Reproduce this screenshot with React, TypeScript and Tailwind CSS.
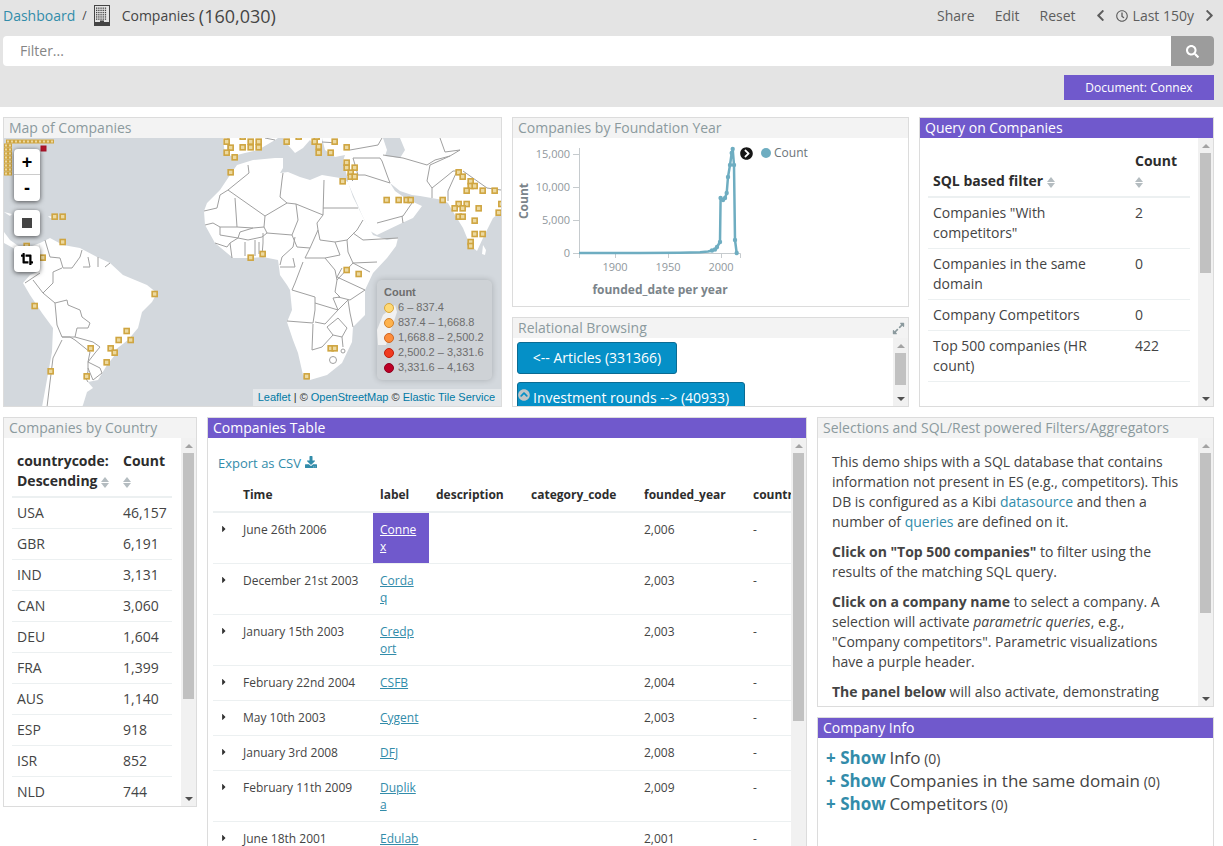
import React from "react";
import { FaChevronLeft, FaChevronRight, FaRegClock, FaSearch, FaDownload, FaCropAlt, FaChevronCircleRight, FaChevronCircleUp, FaExpandAlt, FaCaretRight } from "react-icons/fa";

function Building() {
  const cells: React.ReactNode[] = [];
  for (let r = 0; r < 6; r++) for (let c = 0; c < 5; c++) cells.push(<rect key={r + "-" + c} x={3 + c * 2.2} y={2.5 + r * 2.2} width="1.3" height="1.3" fill="#444" />);
  return (
    <svg width="18" height="21" viewBox="0 0 18 21" className="block">
      <rect x="1.5" y="0.5" width="15" height="20" fill="none" stroke="#444" />
      <rect x="1.5" y="17" width="15" height="3.5" fill="#444" />
      <rect x="7" y="15.5" width="4" height="5" fill="#444" />
      {cells}
    </svg>
  );
}

function Scrollbar({ thumbClass }: { thumbClass: string }) {
  return (
    <div className="w-[15px] shrink-0 bg-[#f1f1f1] flex flex-col items-center overflow-hidden self-stretch">
      <div className="h-[15px] shrink-0 flex items-center justify-center"><div className="w-0 h-0 border-x-[4px] border-x-transparent border-b-[4px] border-b-[#a3a3a3]" /></div>
      <div className="flex-1 w-[11px] min-h-0">
        <div className={"w-[11px] bg-[#c1c1c1] " + thumbClass} />
      </div>
      <div className="h-[15px] shrink-0 flex items-center justify-center"><div className="w-0 h-0 border-x-[4px] border-x-transparent border-t-[4px] border-t-[#505050]" /></div>
    </div>
  );
}

function Panel({ title, purple, className, children, action }: { title: string; purple?: boolean; className: string; children: React.ReactNode; action?: React.ReactNode }) {
  return (
    <section className={"border border-[#dcdcdc] flex flex-col overflow-hidden bg-white " + className}>
      <header className={"h-[20px] shrink-0 pl-[5px] pr-[2px] flex items-center justify-between text-[14px] leading-[20px] " + (purple ? "bg-[#7059cc] text-white" : "bg-[#f3f3f3] text-[#8b9a9e]")}>
        <span>{title}</span>{action}
      </header>
      <div className="flex-1 flex min-h-0 overflow-hidden">{children}</div>
    </section>
  );
}

function Sort() {
  return (
    <span className="inline-flex flex-col align-middle w-[8px] gap-[1px] items-center">
      <span className="w-0 h-0 border-x-[4px] border-x-transparent border-b-[5px] border-b-[#b4bcc0]" />
      <span className="w-0 h-0 border-x-[4px] border-x-transparent border-t-[5px] border-t-[#b4bcc0]" />
    </span>
  );
}

const markers: [number, number][] = [
  [680,425],[692,443],[680,458],[704,472],[692,517],[728,410],[728,442],[752,425],[752,442],[776,425],[776,442],[860,425],[896,410],[944,425],[956,440],[956,458],[992,458],[1004,425],[1040,442],[950,410],[1040,488],[1040,503],[1064,503],[1052,518],[1052,530],[1064,530],[1028,544],[1160,600],[1196,600],[1220,600],[1232,600],[1328,600],[1376,517],[1388,530],[1412,544],[1412,558],[1424,558],[1400,572],[1448,572],[1484,572],[1376,612],[1400,612],[1364,625],[1388,625],[1436,625],[1376,650],[1388,650],[1424,662],[1424,702],[1448,702],[1412,726],[1412,738],[1496,638],[1504,612],[164,650],[188,650],[188,726],[80,738],[128,773],[752,773],[788,762],
];
const markers2: [number, number][] = [[1040,210],[1076,222],[464,282],[104,318],[380,393],[356,420],[392,420],[272,445],[332,445],[344,458],[320,487],[152,514],[260,529],[992,445],[1004,445],[920,529]];

function Marker({ x, y }: { x: number; y: number }) {
  return <rect x={x - 2.5} y={y - 2.5} width="5" height="5" fill="#ecd9a0" stroke="#cfa540" strokeWidth="1.6" />;
}

const borders = [
  "M248,165 L249,173 L228,190 L220,195 L217,208 L204,211",
  "M235,198 L237,227 L220,227 L213,223 L205,225",
  "M228,190 L265,216 L287,203 L280,197 L282,180 L283,173",
  "M287,203 L296,204 L323,215 L324,180",
  "M265,216 L264,227 L253,228 L237,227",
  "M296,204 L298,220 L292,235 L267,233 L264,227",
  "M292,235 L297,247 L310,248 L318,230 L317,223 L323,215",
  "M323,208 H358",
  "M318,230 L320,240 L335,242 L347,240 L357,230 L363,220",
  "M220,227 L220,235 L238,238 L240,232 L253,228",
  "M238,238 L248,240 L262,237 L267,233",
  "M245,242 V256 M255,240 V256 M259,242 V254",
  "M263,233 V243 L262,256",
  "M295,237 L293,247 L282,257 L280,265",
  "M215,243 L227,247 L230,243 L238,238 M230,243 L232,258",
  "M310,248 L305,258 L325,258 L335,270 L337,280 L335,292 L340,297 L333,298 L338,310 L315,303 L315,297 L292,290",
  "M335,242 L340,255 L325,258 M347,240 L348,252 L353,263 L370,272",
  "M353,233 L363,240 L398,238 M353,263 L377,262",
  "M342,268 L337,277 L365,290 M337,280 L353,263",
  "M280,267 H295 L293,258 M303,262 L295,283 L292,290",
  "M287,321 L313,323 L315,310 L315,303",
  "M315,322 L325,324 L338,310 L348,300 L350,313",
  "M327,327 L338,318 L347,328 L342,337 L333,335 Z",
  "M313,324 L312,350 L322,347 L333,335",
  "M342,337 L343,347",
  "M365,290 L350,300 L338,297",
  "M353,327 L350,313",
  "M45,240 L50,257 L60,258 L63,268 L72,268 L80,257 L82,250",
  "M83,267 H90 L88,257 M98,267 V257 M110,263 L105,267",
  "M62,268 L53,272 L53,283 L43,293 L55,303 L67,300 L68,305 L80,310 L82,317 L90,323 L88,328 L77,328 L75,337 L93,342 L100,347 L95,353 L88,362 L100,368 L102,373 L93,380 L88,368",
  "M40,273 L25,283 M43,293 L33,280",
  "M55,303 L57,325 L62,337 L75,337",
  "M62,340 L53,358 L50,382 L47,407",
  "M62,337 L70,337 L75,340 L90,352 L88,362 L88,372 L85,377 L88,382",
  "M382,161 L387,175 L390,183 M353,158 H380 L382,161 M358,175 H365 L390,183",
  "M353,158 L358,175 L352,181",
  "M377,223 L403,216 L412,203 M402,216 L403,223",
  "M430,165 L427,181 L432,188 L432,198 M430,165 L450,156 L460,150",
  "M432,188 L447,176 L453,171 L457,171 L448,191 L448,201",
  "M463,171 L487,188 L501,190 M383,155 L403,158 L427,165 L435,160 L450,156",
  "M382,138 L378,145 L350,150 M440,138 L445,152 L460,150",
  "M228,138 L228,152 M275,140 L265,138",
  "M322,142 L338,143",
];

function WorldMap() {
  const grid: [number, number][] = [];
  for (let i = 0; i < 12; i++) grid.push([8 + i * 4, 141.5]);
  for (let i = 0; i < 2; i++) for (let r = 1; r < 9; r++) grid.push([6 + i * 4, 141.5 + r * 4]);
  return (
    <svg viewBox="4 138 497 268" width="497" height="268" className="block absolute left-0 top-0">
      <rect x="4" y="138" width="497" height="268" fill="#d3d8dd" />
      <g fill="#ffffff">
        <path d="M204,211 L207,203 L220,190 L230,175 L237,165 L253,160 L275,158 L283,158 L283,168 L280,173 L288,172 L300,177 L310,180 L322,175 L340,178 L348,182 L353,197 L363,217 L373,235 L387,240 L398,238 L396,246 L387,258 L373,273 L365,290 L365,315 L353,327 L352,342 L342,363 L327,375 L310,380 L303,375 L298,353 L293,340 L287,322 L292,310 L290,290 L287,285 L280,275 L278,260 L263,257 L250,258 L233,258 L227,253 L215,243 L205,225 Z" />
        <path d="M40,243 L50,238 L63,245 L80,248 L97,257 L110,263 L123,275 L147,285 L157,293 L152,302 L142,312 L138,328 L128,340 L115,350 L115,355 L107,365 L98,380 L88,382 L93,388 L87,392 L83,405 L82,407 L42,407 L52,352 L53,328 L42,313 L30,295 L23,283 L30,275 L37,272 Z" />
        <path d="M4,232 L10,240 L17,245 L24,249 L40,243 L38,256 L26,254 L15,249 L4,243 Z" />
        <path d="M322,138 L325,150 L335,157 L345,155 L343,161 L348,180 L348,183 L362,215 L370,231 L377,235 L402,223 L413,218 L422,206 L411,201 L405,198 L395,191 L390,183 L400,191 L412,195 L420,196 L443,200 L448,203 L455,215 L463,228 L470,245 L477,251 L483,238 L493,218 L502,211 L502,138 Z" />
        <path d="M223,138 L225,155 L233,156 L245,153 L258,150 L275,140 L278,138 Z" />
        <path d="M283,138 L288,145 L295,153 L303,148 L310,140 L315,145 L318,155 L322,148 L322,138 Z" />
        <path d="M378,345 L377,330 L383,315 L395,305 L397,312 L391,330 L386,345 Z" />
        <path d="M483,245 L486,250 L485,255 L482,254 Z" />
        <path d="M4,212 L12,214 L10,216 Z" />
        <path d="M48,216 L54,217 L50,218 Z" />
      </g>
      <path d="M383,138 L387,150 L385,156 L400,158 L405,150 L400,138 Z" fill="#d3d8dd" />
      <g fill="none" stroke="#a0a0a0" strokeWidth="1" strokeLinejoin="round">
        {borders.map((d) => <path key={d} d={d} />)}
        <circle cx="343" cy="351" r="2" />
        <circle cx="333" cy="360" r="3.5" />
      </g>
      {grid.map(([x, y], i) => <rect key={"g" + i} x={x - 1.5} y={y - 1.5} width="3" height="3" fill="#ecd9a0" stroke="#cfa540" strokeWidth="1" />)}
      <rect x="41" y="146" width="5" height="5" fill="#b0172b" stroke="#a51226" />
      {markers.map(([x, y], i) => <Marker key={"a" + i} x={x / 3} y={y / 3} />)}
      {markers2.map(([x, y], i) => <Marker key={"b" + i} x={x / 3} y={y / 3 + 200} />)}
    </svg>
  );
}

function MapControl({ className, children }: { className: string; children: React.ReactNode }) {
  return <div className={"absolute left-[10px] w-[26px] bg-white rounded-[4px] shadow-[0_1px_5px_rgba(0,0,0,0.65)] flex flex-col items-center " + className}>{children}</div>;
}

const legend = [["#fed976", "#d8a63a", "6 – 837.4"], ["#feb24c", "#d2802a", "837.4 – 1,668.8"], ["#fd8d3c", "#cd6523", "1,668.8 – 2,500.2"], ["#f03b20", "#c21d0b", "2,500.2 – 3,331.6"], ["#bd0026", "#8d001d", "3,331.6 – 4,163"]];

function MapPanel() {
  return (
    <Panel title="Map of Companies" className="w-[499px] h-[290px] shrink-0">
      <div className="relative flex-1 overflow-hidden font-['Liberation_Sans',Arial,sans-serif]">
        <WorldMap />
        <MapControl className="top-[11px] h-[52px]">
          <div className="h-[26px] w-full flex items-center justify-center border-b border-[#ccc] text-[18px] font-bold text-black leading-none">+</div>
          <div className="h-[26px] w-full flex items-center justify-center text-[18px] font-bold text-black leading-none">-</div>
        </MapControl>
        <MapControl className="top-[72px] h-[26px] justify-center"><div className="w-[10px] h-[10px] bg-[#444]" /></MapControl>
        <MapControl className="top-[108px] h-[26px] justify-center"><FaCropAlt className="text-[12px] text-black" /></MapControl>
        <div className="absolute left-[373px] top-[142px] w-[115px] h-[100px] rounded-[5px] bg-[rgba(190,190,190,0.22)] shadow-[0_0_6px_rgba(0,0,0,0.2)] pl-[7px] pt-[5px] text-[11px] leading-[15px] text-[#6d6d6d]">
          <div className="font-bold">Count</div>
          {legend.map(([f, s, t]) => (
            <div key={t} className="flex items-center gap-[4px] text-[11px] h-[15px]">
              <span className="w-[10px] h-[10px] rounded-full border" style={{ background: f, borderColor: s }} />
              <span>{t}</span>
            </div>
          ))}
        </div>
        <div className="absolute right-0 bottom-0 h-[17px] pl-[5px] pr-[6px] bg-[rgba(255,255,255,0.4)] text-[11px] leading-[17px] text-[#333] whitespace-nowrap">
          <span className="text-[#0079a5]">Leaflet</span> | © <span className="text-[#0079a5]">OpenStreetMap</span> © <span className="text-[#0079a5]">Elastic Tile Service</span>
        </div>
      </div>
    </Panel>
  );
}

const curve: [number, number][] = [[579,253],[640,253],[680,252.8],[700,252.3],[708,251.5],[712,250.5],[715,249.5],[717,247],[720,242],[720.6,198],[723,200],[725,198],[726.7,193],[728,177],[730,165],[731.7,153],[732.7,149],[734,165],[735,240],[736.7,253]];

function Chart() {
  const axis = "#c6cbce";
  const label = "#90989d";
  const pts = curve.map(([x, y]) => x + "," + y).join(" ");
  return (
    <svg viewBox="513 138 395 168" width="395" height="168" className="block font-['Open_Sans',sans-serif]">
      <g stroke={axis} fill="none">
        <path d="M579.5,148 V253.5 H740.5 V258" />
        {[154, 187, 220, 253].map((y) => <path key={y} d={"M573," + (y + 0.5) + " H579"} />)}
        {[579.5, 615.5, 668.5, 721.5].map((x) => <path key={x} d={"M" + x + ",253 V258"} />)}
      </g>
      <g fill={label} fontSize="11" textAnchor="end">
        <text x="570" y="158">15,000</text><text x="570" y="191">10,000</text><text x="570" y="224">5,000</text><text x="570" y="257">0</text>
      </g>
      <g fill={label} fontSize="11" textAnchor="middle">
        <text x="615" y="271">1900</text><text x="668" y="271">1950</text><text x="721" y="271">2000</text>
      </g>
      <text x="660" y="294" fill="#7b848a" fontSize="12" fontWeight="700" textAnchor="middle">founded_date per year</text>
      <text x="0" y="0" fill="#7b848a" fontSize="12" fontWeight="700" textAnchor="middle" transform="translate(528,201) rotate(-90)">Count</text>
      <polyline points={pts} fill="none" stroke="#6eadc1" strokeWidth="2.5" strokeLinejoin="round" />
      {curve.slice(5).map(([x, y], i) => <circle key={i} cx={x} cy={y} r="2.2" fill="#6eadc1" />)}
      <circle cx="766" cy="153" r="5" fill="#6eadc1" />
      <text x="774" y="157" fill="#6b7479" fontSize="12">Count</text>
    </svg>
  );
}

const th = "text-left font-bold text-[#2d2d2d]";
const countries = [["USA","46,157"],["GBR","6,191"],["IND","3,131"],["CAN","3,060"],["DEU","1,604"],["FRA","1,399"],["AUS","1,140"],["ESP","918"],["ISR","852"],["NLD","744"]];
const queries = [['Companies "With competitors"',"2"],["Companies in the same domain","0"],["Company Competitors","0"],["Top 500 companies (HR count)","422"]];
const rows = [["June 26th 2006","Connex","2,006",true],["December 21st 2003","Cordaq","2,003",true],["January 15th 2003","Credport","2,003",true],["February 22nd 2004","CSFB","2,004",false],["May 10th 2003","Cygent","2,003",false],["January 3rd 2008","DFJ","2,008",false],["February 11th 2009","Duplika","2,009",true],["June 18th 2001","Edulab","2,001",true]] as [string,string,string,boolean][];

function CompanyLine({ name, n }: { name: string; n: string }) {
  return (
    <div className="h-[23px] leading-[23px] whitespace-nowrap text-[#444]">
      <span className="text-[#328caa] font-bold text-[17px]">+ Show</span>{" "}
      <span className="text-[17px]">{name}</span> <span className="text-[14px]">{n}</span>
    </div>
  );
}

export default function App() {
  return (
    <div className="w-[1223px] h-[846px] overflow-hidden bg-white text-[#444] text-[14px] font-['Open_Sans',sans-serif]">
      <div className="h-[107px] bg-[#e4e4e4] px-[3px] flex flex-col">
        <div className="h-[36px] flex items-center justify-between pb-[5px] w-[1213px]">
          <div className="flex items-center">
            <span className="text-[#328caa] text-[14px]">Dashboard</span>
            <span className="ml-[7px] text-[12px]">/</span>
            <span className="ml-[6px]"><Building /></span>
            <span className="ml-[11px] text-[14px]">Companies</span>
            <span className="ml-[4px] text-[18px] leading-none">(160,030)</span>
          </div>
          <div className="flex items-center text-[#5d5d5d] text-[14px]">
            <span>Share</span><span className="ml-[20px]">Edit</span><span className="ml-[20px]">Reset</span>
            <FaChevronLeft className="ml-[18px] text-[13px]" />
            <FaRegClock className="ml-[9px] text-[12px]" />
            <span className="ml-[5px]">Last 150y</span>
            <FaChevronRight className="ml-[9px] text-[13px]" />
          </div>
        </div>
        <div className="h-[30px] flex rounded-[4px] overflow-hidden bg-white w-[1211px]">
          <div className="flex-1 pl-[17px] leading-[30px] text-[#858585]">Filter...</div>
          <div className="w-[43px] bg-[#9c9c9c] flex items-center justify-center text-white text-[13px]"><FaSearch /></div>
        </div>
        <div className="flex justify-end w-[1211px] mt-[9px]">
          <div className="w-[150px] h-[25px] bg-[#7059cc] text-white text-[12px] leading-[25px] text-center">Document: Connex</div>
        </div>
      </div>

      <div className="pt-[10px] pl-[3px]">
        <div className="flex h-[290px]">
          <MapPanel />
          <div className="ml-[10px] w-[397px] shrink-0 flex flex-col gap-[10px]">
            <Panel title="Companies by Foundation Year" className="h-[190px]">
              <div className="relative flex-1">
                <Chart />
                <FaChevronCircleRight className="absolute left-[227px] top-[9px] text-[13px] text-[#161616]" />
              </div>
            </Panel>
            <Panel title="Relational Browsing" className="h-[90px]" action={<FaExpandAlt className="text-[13px] text-[#8b9a9e] mr-[1px]" />}>
              <div className="flex-1 min-w-0 overflow-hidden pl-[4px] pt-[4px] flex flex-col items-start gap-[8px]">
                <div className="w-[160px] h-[32px] shrink-0 bg-[#0590c7] border border-[#0a6b93] rounded-[3px] text-white text-center leading-[30px]">&lt;-- Articles (331366)</div>
                <div className="h-[32px] shrink-0 pr-[15px] bg-[#0590c7] border border-[#0a6b93] rounded-[3px] text-white leading-[30px] flex items-center">
                  <FaChevronCircleUp className="text-[12px] text-[#c0c4c6] mr-[3px] -mt-[7px]" />Investment rounds --&gt; (40933)
                </div>
              </div>
              <Scrollbar thumbClass="h-[32px]" />
            </Panel>
          </div>
          <Panel title="Query on Companies" purple className="ml-[10px] w-[295px] shrink-0">
            <div className="flex-1 min-w-0 pl-[8px] pt-[7px] pr-[8px]">
              <table className="w-full border-collapse table-fixed">
                <colgroup><col className="w-[202px]" /><col /></colgroup>
                <thead>
                  <tr className="h-[52px] border-b-2 border-[#ecf0f1]">
                    <th className={th + " align-bottom px-[5px] pb-[5px] leading-[20px]"}>SQL based filter <Sort /></th>
                    <th className={th + " align-bottom px-[5px] pb-[5px] leading-[20px]"}>Count<br /><Sort /></th>
                  </tr>
                </thead>
                <tbody>
                  {queries.map(([a, b]) => (
                    <tr key={a} className="border-b border-[#ecf0f1]">
                      <td className="align-top px-[5px] py-[5px] leading-[20px]">{a}</td>
                      <td className="align-top px-[5px] py-[5px] leading-[20px]">{b}</td>
                    </tr>
                  ))}
                </tbody>
              </table>
            </div>
            <Scrollbar thumbClass="h-[120px]" />
          </Panel>
        </div>

        <div className="flex mt-[10px] h-[440px] items-start">
          <Panel title="Companies by Country" className="w-[194px] h-[390px] shrink-0">
            <div className="flex-1 min-w-0 pl-[8px] pt-[13px] pr-[9px]">
              <table className="w-full border-collapse">
                <thead>
                  <tr className="border-b-2 border-[#ecf0f1]">
                    <th className={th + " align-bottom px-[5px] pb-[5px] leading-[20px] w-[106px]"}>countrycode: Descending <Sort /></th>
                    <th className={th + " align-bottom px-[5px] pb-[5px] leading-[20px]"}>Count<br /><Sort /></th>
                  </tr>
                </thead>
                <tbody>
                  {countries.map(([a, b]) => (
                    <tr key={a} className="h-[31px] border-b border-[#ecf0f1]">
                      <td className="px-[5px]">{a}</td><td className="px-[5px]">{b}</td>
                    </tr>
                  ))}
                </tbody>
              </table>
            </div>
            <Scrollbar thumbClass="h-[246px]" />
          </Panel>

          <Panel title="Companies Table" purple className="ml-[10px] w-[600px] h-[440px] shrink-0">
            <div className="flex-1 min-w-0 pl-[5px] pr-[1px] overflow-hidden">
              <div className="h-[48px] pl-[5px] pt-[16px] text-[13px] leading-[18px] text-[#328caa] flex items-start gap-[4px]">Export as CSV <FaDownload className="text-[12px] mt-[2px]" /></div>
              <div className="overflow-hidden w-[578px] text-[12px]">
                <table className="w-[680px] table-fixed border-collapse">
                  <colgroup><col className="w-[23px]" /><col className="w-[137px]" /><col className="w-[56px]" /><col className="w-[95px]" /><col className="w-[113px]" /><col className="w-[109px]" /><col /></colgroup>
                  <thead>
                    <tr className="h-[26px] border-b-2 border-[#ecf0f1] align-top leading-[17px]">
                      <th /><th className={th + " px-[7px]"}>Time</th><th className={th + " px-[7px]"}>label</th><th className={th + " px-[7px]"}>description</th><th className={th + " px-[7px]"}>category_code</th><th className={th + " px-[7px]"}>founded_year</th><th className={th + " px-[7px]"}>country</th>
                    </tr>
                  </thead>
                  <tbody>
                    {rows.map(([d, l, y, two], i) => (
                      <tr key={l} className={(two ? "h-[51px] " : "h-[35px] ") + "border-b border-[#ecf0f1] align-top leading-[17px]"}>
                        <td className="pt-[8px] pl-[6px]"><FaCaretRight className="text-[10px] mt-[3px] text-[#333]" /></td>
                        <td className="pt-[8px] px-[7px]">{d}</td>
                        <td className={"pt-[8px] pl-[7px] pr-[9px] break-all underline " + (i === 0 ? "bg-[#7059cc] text-white" : "text-[#328caa]")}>{l}</td>
                        <td /><td />
                        <td className="pt-[8px] px-[7px]">{y}</td>
                        <td className="pt-[8px] px-[7px]">-</td>
                      </tr>
                    ))}
                  </tbody>
                </table>
              </div>
            </div>
            <Scrollbar thumbClass="h-[268px]" />
          </Panel>

          <div className="ml-[10px] w-[397px] shrink-0 flex flex-col gap-[10px]">
            <Panel title="Selections and SQL/Rest powered Filters/Aggregators" className="h-[290px]">
              <div className="flex-1 min-w-0 pl-[14px] pr-[14px] pt-[14px] leading-[20px] overflow-hidden">
                <p className="mb-[10px]">This demo ships with a SQL database that contains information not present in ES (e.g., competitors). This DB is configured as a Kibi <span className="text-[#328caa]">datasource</span> and then a number of <span className="text-[#328caa]">queries</span> are defined on it.</p>
                <p className="mb-[10px]"><b>Click on "Top 500 companies"</b> to filter using the results of the matching SQL query.</p>
                <p className="mb-[10px]"><b>Click on a company name</b> to select a company. A selection will activate <i>parametric queries</i>, e.g., "Company competitors". Parametric visualizations have a purple header.</p>
                <p><b>The panel below</b> will also activate, demonstrating</p>
              </div>
              <Scrollbar thumbClass="h-[160px]" />
            </Panel>
            <Panel title="Company Info" purple className="h-[140px]">
              <div className="flex-1 pl-[8px] pt-[8px]">
                <CompanyLine name="Info" n="(0)" />
                <CompanyLine name="Companies in the same domain" n="(0)" />
                <CompanyLine name="Competitors" n="(0)" />
              </div>
            </Panel>
          </div>
        </div>
      </div>
    </div>
  );
}
